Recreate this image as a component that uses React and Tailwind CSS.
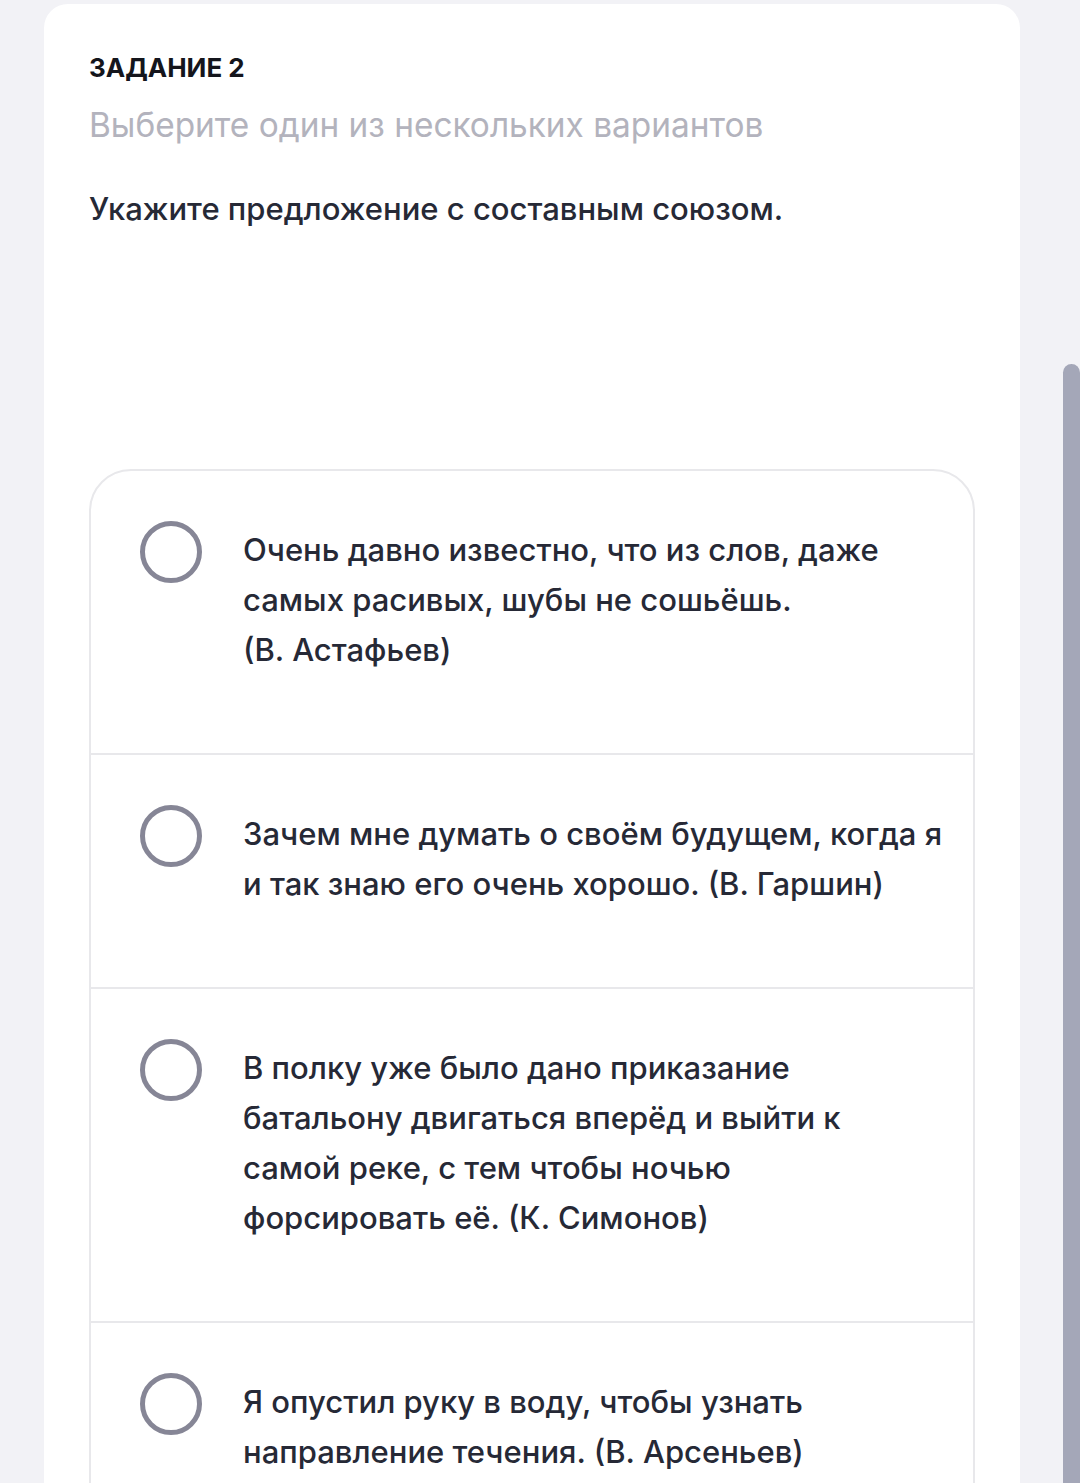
import React from "react";

const options = [
  ["Очень давно известно, что из слов, даже", "самых расивых, шубы не сошьёшь.", "(В. Астафьев)"],
  ["Зачем мне думать о своём будущем, когда я", "и так знаю его очень хорошо. (В. Гаршин)"],
  [
    "В полку уже было дано приказание",
    "батальону двигаться вперёд и выйти к",
    "самой реке, с тем чтобы ночью",
    "форсировать её. (К. Симонов)",
  ],
  ["Я опустил руку в воду, чтобы узнать", "направление течения. (В. Арсеньев)"],
];

const Option = ({ lines, first }) => (
  <div
    className={
      "flex items-start pl-[49px] pr-[30px] pt-[54px] pb-[78px] " +
      (first ? "" : "border-t-2 border-[#e8e8eb]")
    }
  >
    <div className="mt-[-4px] h-[62px] w-[62px] shrink-0 rounded-full border-[5px] border-[#868696]" />
    <p className="ml-[41px] text-[31px] font-medium leading-[50px] text-[#262936]">
      {lines.map((l, i) => (
        <span key={i} className="block whitespace-nowrap">
          {l}
        </span>
      ))}
    </p>
  </div>
);

export default function App() {
  return (
    <div
      className="relative h-[1483px] overflow-hidden bg-[#f2f2f6]"
      style={{ fontFamily: "Inter, 'Noto Sans', sans-serif" }}
    >
      <div className="ml-[44px] mt-[4px] w-[976px] rounded-t-[24px] bg-white pl-[45px] pr-[45px] pt-[44px] pb-10">
        <h1 className="text-[26px] font-bold leading-[40px] text-[#14151c]">ЗАДАНИЕ 2</h1>
        <p className="mt-[15px] text-[33.4px] leading-[44px] text-[#b3b3bd]">
          Выберите один из нескольких вариантов
        </p>
        <p className="mt-[40px] text-[31px] font-medium leading-[44px] text-[#262936]">
          Укажите предложение с составным союзом.
        </p>
        <div className="mt-[238px] overflow-hidden rounded-t-[42px] border-2 border-[#e8e8eb]">
          {options.map((o, i) => (
            <Option key={i} lines={o} first={i === 0} />
          ))}
        </div>
      </div>
      <div className="absolute right-0 top-[364px] h-[1200px] w-[17px] rounded-t-full bg-[#a4a7b8]" />
    </div>
  );
}
